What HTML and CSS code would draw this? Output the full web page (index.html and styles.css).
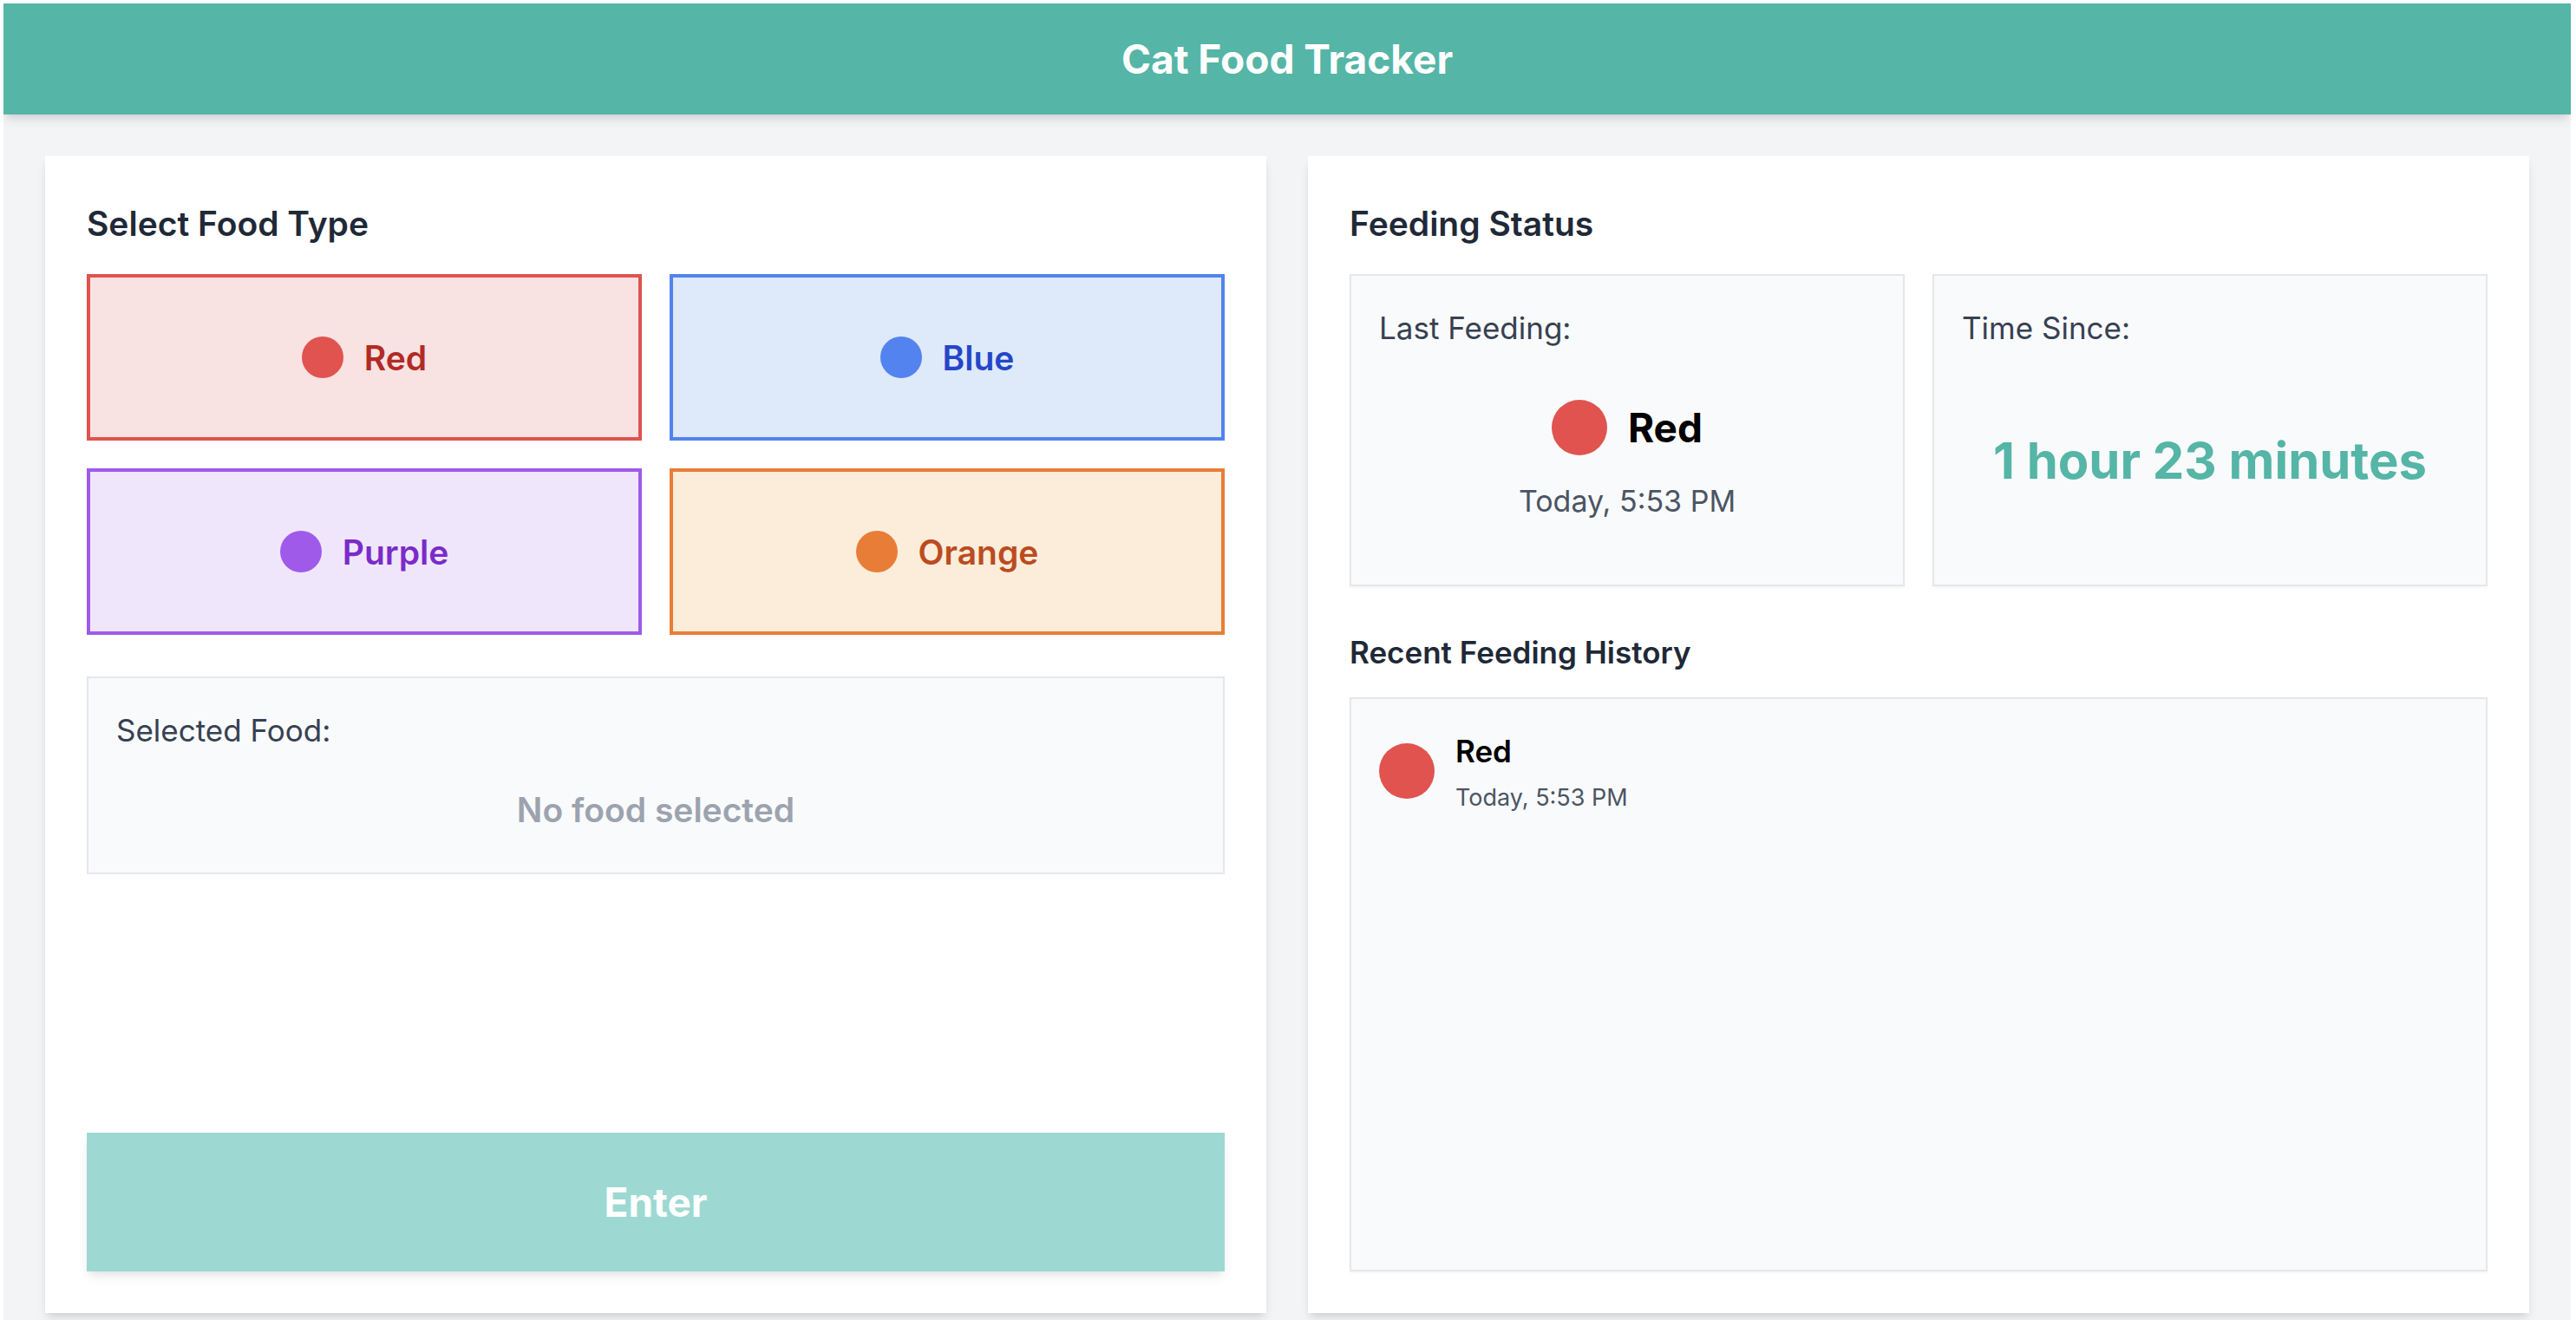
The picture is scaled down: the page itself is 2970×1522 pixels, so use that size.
FILE: index.html
```html
<!DOCTYPE html>
<html lang="en">
<head>
<meta charset="utf-8">
<title>Cat Food Tracker</title>
<link rel="stylesheet" href="styles.css">
</head>
<body>
<div class="app">
  <header class="topbar">
    <h1 class="app-title">Cat Food Tracker</h1>
  </header>
  <main class="main">
    <section class="card">
      <h2 class="card-title">Select Food Type</h2>
      <div class="food-grid">
        <button class="food-btn food-red"><span class="dot"></span><span class="food-name">Red</span></button>
        <button class="food-btn food-blue"><span class="dot"></span><span class="food-name">Blue</span></button>
        <button class="food-btn food-purple"><span class="dot"></span><span class="food-name">Purple</span></button>
        <button class="food-btn food-orange"><span class="dot"></span><span class="food-name">Orange</span></button>
      </div>
      <div class="selected-box">
        <div class="selected-label">Selected Food:</div>
        <div class="selected-value">No food selected</div>
      </div>
      <button class="enter-btn">Enter</button>
    </section>

    <section class="card">
      <h2 class="card-title">Feeding Status</h2>
      <div class="status-grid">
        <div class="status-box">
          <div class="status-label">Last Feeding:</div>
          <div class="status-body">
            <div class="last-row"><span class="dot-lg"></span><span class="last-name">Red</span></div>
            <div class="last-time">Today, 5:53 PM</div>
          </div>
        </div>
        <div class="status-box">
          <div class="status-label">Time Since:</div>
          <div class="status-body">
            <div class="since-value">1 hour 23 minutes</div>
          </div>
        </div>
      </div>
      <h3 class="history-title">Recent Feeding History</h3>
      <div class="history-box">
        <div class="history-item">
          <span class="dot-lg"></span>
          <div class="history-text">
            <div class="history-name">Red</div>
            <div class="history-time">Today, 5:53 PM</div>
          </div>
        </div>
      </div>
    </section>
  </main>
</div>
</body>
</html>
```

FILE: styles.css
```css
* { box-sizing: border-box; }

html, body { height: 100%; }

body {
  margin: 4px 6px 0 4px;
  background: #ffffff;
  font-family: Inter, "Noto Sans", "Liberation Sans", sans-serif;
  overflow: hidden;
}

.app {
  background: #f3f4f6;
  min-height: 1518px;
}

.topbar {
  background: #55b5a6;
  height: 128px;
  display: flex;
  align-items: center;
  justify-content: center;
  box-shadow: 0 8px 12px -2px rgba(0,0,0,0.1), 0 4px 8px -4px rgba(0,0,0,0.1);
  position: relative;
  z-index: 1;
}

.app-title {
  margin: 0;
  color: #ffffff;
  font-size: 46px;
  line-height: 64px;
  font-weight: 700;
}

.main {
  display: grid;
  grid-template-columns: 1fr 1fr;
  gap: 48px;
  padding: 48px 48px 8px 48px;
}

.card {
  background: #ffffff;
  height: 1334px;
  padding: 48px;
  display: flex;
  flex-direction: column;
  box-shadow: 0 8px 12px -2px rgba(0,0,0,0.1), 0 4px 8px -4px rgba(0,0,0,0.1);
}

.card-title {
  margin: 2px 0 30px 0;
  font-size: 39px;
  line-height: 56px;
  font-weight: 600;
  color: #1f2937;
}

.food-grid {
  display: grid;
  grid-template-columns: 1fr 1fr;
  gap: 32px;
}

.food-btn {
  height: 192px;
  border: 4px solid;
  display: flex;
  align-items: center;
  justify-content: center;
  font-family: inherit;
  font-size: 39px;
  font-weight: 600;
  padding: 0;
  cursor: pointer;
}

.dot {
  width: 48px;
  height: 48px;
  border-radius: 50%;
  margin-right: 24px;
  flex: none;
}

.food-red { background: #f8e2e2; border-color: #e0534f; color: #b22a25; }
.food-red .dot { background: #e0534f; }
.food-blue { background: #dee9fa; border-color: #5283ee; color: #2446c8; }
.food-blue .dot { background: #5283ee; }
.food-purple { background: #f0e6fc; border-color: #9f5aea; color: #7a2bc9; }
.food-purple .dot { background: #9f5aea; }
.food-orange { background: #fcedda; border-color: #e87d38; color: #bb4c1f; }
.food-orange .dot { background: #e87d38; }

.selected-box {
  margin-top: 48px;
  height: 228px;
  background: #f9fafb;
  border: 2px solid #e5e7eb;
  padding: 32px;
}

.selected-label {
  font-size: 35px;
  line-height: 56px;
  color: #374151;
}

.selected-value {
  margin-top: 36px;
  text-align: center;
  font-size: 39px;
  line-height: 56px;
  font-weight: 600;
  color: #9ca3af;
}

.enter-btn {
  margin-top: auto;
  height: 160px;
  width: 100%;
  border: none;
  background: #9dd9d2;
  color: #ffffff;
  font-family: inherit;
  font-size: 46px;
  font-weight: 700;
  box-shadow: 0 8px 12px -2px rgba(0,0,0,0.08), 0 4px 8px -4px rgba(0,0,0,0.08);
}

.status-grid {
  display: grid;
  grid-template-columns: 1fr 1fr;
  gap: 32px;
}

.status-box {
  height: 360px;
  background: #f9fafb;
  border: 2px solid #e5e7eb;
  box-shadow: 0 2px 2px rgba(0,0,0,0.04);
  padding: 32px;
  display: flex;
  flex-direction: column;
}

.status-label {
  font-size: 35px;
  line-height: 56px;
  color: #374151;
  margin-bottom: 16px;
}

.status-body {
  flex: 1;
  display: flex;
  flex-direction: column;
  align-items: center;
  justify-content: center;
  padding-bottom: 2px;
}

.last-row {
  display: flex;
  align-items: center;
}

.dot-lg {
  width: 64px;
  height: 64px;
  border-radius: 50%;
  background: #e0534f;
  margin-right: 24px;
  flex: none;
}

.last-name {
  font-size: 46px;
  line-height: 64px;
  font-weight: 700;
  color: #000000;
}

.last-time {
  margin-top: 29px;
  font-size: 34px;
  line-height: 48px;
  color: #4b5563;
}

.since-value {
  font-size: 58px;
  line-height: 72px;
  font-weight: 700;
  color: #55b5a6;
}

.history-title {
  margin: 48px 0 24px 0;
  font-size: 35px;
  line-height: 56px;
  font-weight: 600;
  color: #1f2937;
}

.history-box {
  flex: 1;
  background: #f9fafb;
  border: 2px solid #e5e7eb;
  box-shadow: 0 2px 2px rgba(0,0,0,0.04);
  padding: 32px;
}

.history-item {
  display: flex;
  align-items: center;
}

.history-name {
  font-size: 35px;
  line-height: 56px;
  font-weight: 600;
  color: #000000;
}

.history-time {
  margin-top: 6px;
  font-size: 27px;
  line-height: 40px;
  color: #4b5563;
}
```
